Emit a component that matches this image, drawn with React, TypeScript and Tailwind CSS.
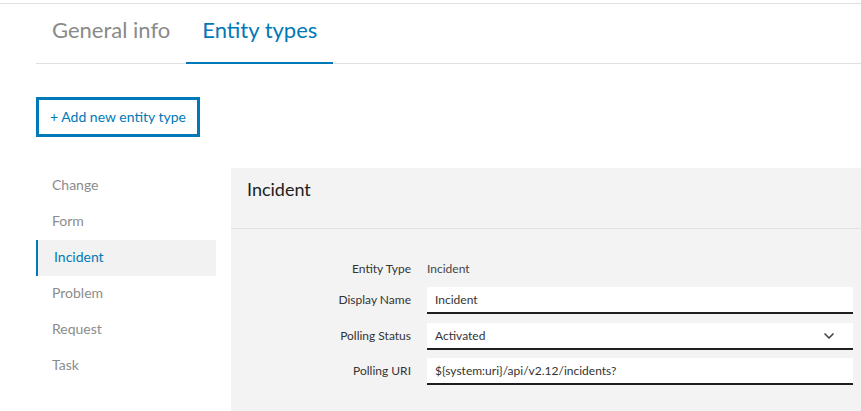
import { ChevronDown } from 'lucide-react';

const entityTypes = ['Change', 'Form', 'Incident', 'Problem', 'Request', 'Task'];

export default function App() {
  const active = 'Incident';

  return (
    <div className="w-[861px] h-[411px] overflow-hidden bg-white font-['Lato','Liberation_Sans',sans-serif] text-[#333]">
      <div className="pt-[3px]">
        <div className="border-t border-[#e0e0e0]" />
      </div>

      <div className="pl-9">
        {/* Tabs */}
        <div className="flex border-b border-[#e0e0e0] h-[60px]">
          <div className="px-4 flex items-center text-[22px] text-[#8a8a8a] pb-[8px]">General info</div>
          <div className="px-4 flex items-center text-[22px] text-[#0079b8] border-b-2 border-[#0079b8] -mb-px pb-[7px]">
            Entity types
          </div>
        </div>

        <button className="mt-[33px] w-[164px] h-[40px] border-[3px] border-[#0079b8] text-[#0079b8] text-[14px] flex items-center justify-center pb-[2px]">
          + Add new entity type
        </button>

        <div className="flex mt-[31px] gap-[15px]">
          {/* Side nav */}
          <div className="w-[180px] shrink-0 flex flex-col">
            {entityTypes.map((t) =>
              t === active ? (
                <div
                  key={t}
                  className="h-9 flex items-center pl-4 pb-[3px] text-[14px] text-[#0079b8] bg-[#f2f2f2] border-l-2 border-[#0079b8]"
                >
                  {t}
                </div>
              ) : (
                <div key={t} className="h-9 flex items-center pl-4 pb-[3px] text-[14px] text-[#8c8c8c]">
                  {t}
                </div>
              )
            )}
          </div>

          {/* Detail panel */}
          <div className="flex-1 bg-[#f3f3f3] h-[260px]">
            <div className="h-[61px] border-b border-[#e2e2e2] px-4 pt-[8px] text-[18px] text-[#222]">Incident</div>
            <div className="pr-2 pt-[30px] text-[12px]">
              <div className="flex items-center h-5 mb-2">
                <div className="w-[180px] text-right text-[#333]">Entity Type</div>
                <div className="pl-4 text-[#444]">Incident</div>
              </div>
              <div className="flex items-center mb-[9px]">
                <div className="w-[180px] text-right pb-[2px]">Display Name</div>
                <div className="ml-4 flex-1 h-[27px] bg-white border-b-2 border-[#1f1f1f] flex items-center px-2 text-[#333]">
                  Incident
                </div>
              </div>
              <div className="flex items-center mb-[8px]">
                <div className="w-[180px] text-right pb-[2px]">Polling Status</div>
                <div className="ml-4 flex-1 h-[27px] bg-white border-b-2 border-[#1f1f1f] flex items-center justify-between pl-2 pr-4 text-[#333]">
                  <span>Activated</span>
                  <ChevronDown className="w-4 h-4 text-[#444]" strokeWidth={2.5} />
                </div>
              </div>
              <div className="flex items-center">
                <div className="w-[180px] text-right pb-[2px]">Polling URI</div>
                <div className="ml-4 flex-1 h-[27px] bg-white border-b-2 border-[#1f1f1f] flex items-center px-2 text-[#333]">
                  {'${system:uri}/api/v2.12/incidents?'}
                </div>
              </div>
            </div>
          </div>
        </div>
      </div>
    </div>
  );
}
